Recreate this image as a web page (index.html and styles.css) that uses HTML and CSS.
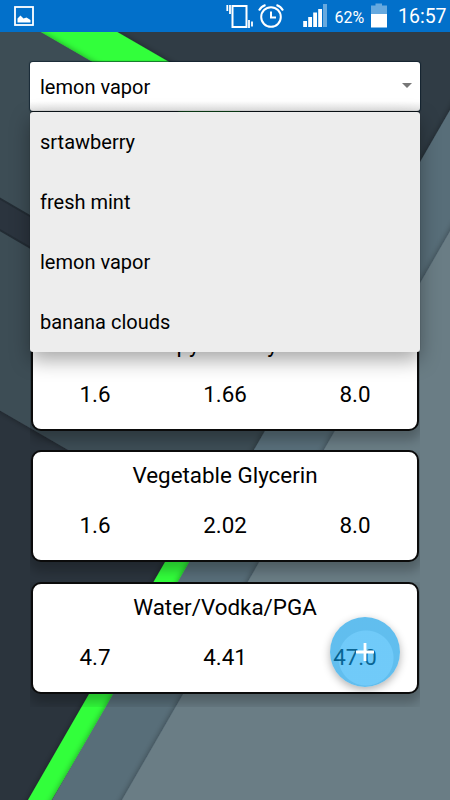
FILE: index.html
```
<!DOCTYPE html>
<html lang="en">
<head>
    <meta charset="UTF-8">
    <meta name="viewport" content="width=device-width, initial-scale=1.0">
    <title>Liquid Mixer</title>
    <link rel="stylesheet" href="styles.css">
</head>
<body>

    <svg class="wallpaper" viewBox="0 0 450 800">
        <defs>
            <filter id="sh" x="-20%" y="-20%" width="140%" height="140%">
                <feDropShadow dx="0" dy="0" stdDeviation="3" flood-color="#000" flood-opacity="0.4"/>
            </filter>
        </defs>
        <rect width="450" height="800" fill="#303c45"/>
        <path d="M-20 399 L300 584 V820 H-20Z" fill="#2b343d"/>
        <path d="M-15 0 H62 L240 103 V160Z" fill="#33ff3a" filter="url(#sh)"/>
        <path d="M-20 -3 L300 182 V584 L-20 399Z" fill="#3e4d55" filter="url(#sh)"/>
        <path d="M-20 187 L60 233.500 V265 L-20 218.500Z" fill="#2b343e"/>
        <path d="M-20 187 L60 233.500" class="edge"/>
        <path d="M-20 218.500 L60 265" class="edge"/>
        <path d="M16.500 820 L182 532.500 L207 531 L235 490 L40 820Z" fill="#33ff3a" filter="url(#sh)"/>
        <path d="M40.500 820 L525 -20 H600 V820Z" fill="#586e79" filter="url(#sh)"/>
        <path d="M110.500 820 L595 -20 H600 V820Z" fill="#6a7d85" filter="url(#sh)"/>
    </svg>

    <div class="status">
        <svg class="pic" width="20" height="20" viewBox="0 0 20 20">
            <rect x="1" y="1" width="18" height="18" fill="none" stroke="#fff" stroke-width="1.800"/>
            <path d="M3.500 16.500 V12.500 L6.500 9.500 L9.500 12.500 L12.500 11.500 L16.500 14 V16.500Z" fill="#fff"/>
        </svg>
        <svg class="icons" width="166" height="32" viewBox="0 0 166 32">
            <g fill="none" stroke="#fff" stroke-width="2">
                <rect x="7.500" y="6" width="14" height="21"/>
                <path d="M2.300 5 V11 M5 5 V14 M24 20 V28 M27 21.500 V26.500" stroke-width="1.800"/>
                <circle cx="46" cy="17" r="9.800"/>
                <path d="M46 11.500 V17.500 H51"/>
                <path d="M34 10.500 Q36 6.500 40.500 5 M58 10.500 Q56 6.500 51.500 5"/>
            </g>
            <path d="M78.200 21 h3.800 v6 h-3.800Z M83.200 17 h3.800 v10 h-3.800Z M88.200 12.500 h3.800 v14.500 h-3.800Z M93.200 9 h3.800 v18 h-3.800Z" fill="#fff"/>
            <path d="M98 4 h4 v23 h-4Z" fill="#66a9df"/>
            <path d="M146 5.500 h4.500 V3.500 h6.500 v2 h5 V14 h-16Z" fill="#66a9df"/>
            <rect x="146" y="14" width="16" height="13.500" fill="#fff"/>
            <text x="109.500" y="22.500" class="pct">62%</text>
        </svg>
        <span class="time">16:57</span>
    </div>

    <div class="page">
        <div class="spinner">
            <div class="select">
                <span>lemon vapor</span>
                <i class="arrow"></i>
            </div>
            <div class="menu">
                <div>srtawberry</div>
                <div>fresh mint</div>
                <div>lemon vapor</div>
                <div>banana clouds</div>
            </div>
        </div>

        <div class="list">
            <div class="slot">
                <div class="card">
                    <div class="name">Propylene Glycol</div>
                    <div class="vals"><span>1.6</span><span>1.66</span><span>8.0</span></div>
                </div>
            </div>
            <div class="slot">
                <div class="card">
                    <div class="name">Vegetable Glycerin</div>
                    <div class="vals"><span>1.6</span><span>2.02</span><span>8.0</span></div>
                </div>
            </div>
            <div class="slot">
                <div class="card">
                    <div class="name">Water/Vodka/PGA</div>
                    <div class="vals"><span>4.7</span><span>4.41</span><span>47.0</span></div>
                </div>
            </div>
        </div>
    </div>

    <button type="button" class="fab">
        <svg width="70" height="70" viewBox="0 0 70 70">
            <path d="M26 35 H44 M35 26 V44" stroke="#fff" stroke-width="2.800"/>
        </svg>
    </button>

</body>
</html>
```
FILE: styles.css
```
body {
    margin: 0;
    height: 800px;
    position: relative;
    overflow: hidden;
    font-family: Roboto, "Liberation Sans", sans-serif;
    color: #000;
}
.wallpaper {
    position: absolute;
    top: 0;
    left: 0;
    width: 450px;
    height: 800px;
}
.edge {
    fill: none;
    stroke: #232c34;
    stroke-width: 2;
}
.status {
    position: relative;
    height: 32px;
    background-color: #0270ca;
    display: flex;
    align-items: center;
    color: white;
}
.pic {
    margin-left: 14px;
}
.icons {
    margin-left: 191px;
}
.pct {
    fill: white;
    font-size: 16px;
}
.time {
    margin-left: 7px;
    font-size: 19.5px;
}
.page {
    position: relative;
    padding: 30px 30px 0;
}
.spinner {
    position: relative;
    height: 256.5px;
    z-index: 2;
    font-size: 20px;
}
.select {
    height: 49px;
    display: flex;
    align-items: center;
    justify-content: space-between;
    padding: 0 8px 0 10px;
    background: linear-gradient(white 80%, #e4e4e4);
    border-radius: 3px;
    box-shadow: 0 0 1px 1px rgba(0, 20, 35, 0.6);
}
.arrow {
    border: 5px solid transparent;
    border-top-color: #777;
    border-bottom: 0;
    margin-bottom: 3px;
}
.menu {
    position: absolute;
    top: 49.5px;
    left: 0;
    right: 0;
    background-color: #ededed;
    border-radius: 3px;
    box-shadow: 0 -1px 1px rgba(0, 0, 0, 0.6), 0 8px 20px rgba(0, 0, 0, 0.35);
}
.menu div {
    height: 60px;
    line-height: 61px;
    padding-left: 10px;
}
.slot {
    height: 131.5px;
    overflow: hidden;
    box-sizing: border-box;
    padding: 0 1px;
}
.slot:last-child {
    height: 125px;
}
.card {
    height: 112px;
    box-sizing: border-box;
    border: 2px solid #0b0b0b;
    border-radius: 10px;
    background-color: white;
    box-shadow: 0 6px 12px 3px rgba(0, 0, 0, 0.25);
    font-size: 22.4px;
    text-align: center;
}
.name {
    padding-top: 9px;
    line-height: 28px;
}
.vals {
    display: flex;
    margin: 0 -3px;
    padding-top: 22px;
    line-height: 28px;
}
.vals span {
    flex: 1;
}
.fab {
    position: absolute;
    left: 330px;
    top: 617px;
    width: 70px;
    height: 70px;
    padding: 0;
    border: 0;
    border-radius: 50%;
    background: radial-gradient(circle at 36px 41px, rgba(17, 167, 245, 0.6) 27px, rgba(0, 150, 228, 0.62) 28px);
    box-shadow: 0 3px 8px rgba(0, 0, 0, 0.3);
    z-index: 3;
}
```
